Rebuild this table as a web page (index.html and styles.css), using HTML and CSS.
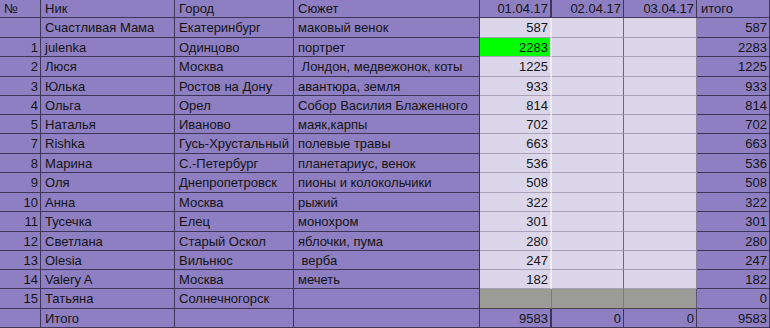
FILE: index.html
```html
<!DOCTYPE html>
<html lang="ru">
<head>
<meta charset="utf-8">
<title>Таблица</title>
<link rel="stylesheet" href="styles.css">
</head>
<body>
<div class="sheet">
  <div class="c">№</div><div class="c">Ник</div><div class="c">Город</div><div class="c">Сюжет</div><div class="c n d1">01.04.17</div><div class="c n">02.04.17</div><div class="c n">03.04.17</div><div class="c">итого</div>

  <div class="c n"></div><div class="c">Счастливая Мама</div><div class="c">Екатеринбург</div><div class="c">маковый венок</div><div class="c n l l1">587</div><div class="c l l2"></div><div class="c l l3"></div><div class="c n">587</div>

  <div class="c n">1</div><div class="c">julenka</div><div class="c">Одинцово</div><div class="c">портрет</div><div class="c n g">2283</div><div class="c l l2"></div><div class="c l l3"></div><div class="c n">2283</div>

  <div class="c n">2</div><div class="c">Люся</div><div class="c">Москва</div><div class="c"> Лондон, медвежонок, коты</div><div class="c n l l1">1225</div><div class="c l l2"></div><div class="c l l3"></div><div class="c n">1225</div>

  <div class="c n">3</div><div class="c">Юлька</div><div class="c">Ростов на Дону</div><div class="c">авантюра, земля</div><div class="c n l l1">933</div><div class="c l l2"></div><div class="c l l3"></div><div class="c n">933</div>

  <div class="c n">4</div><div class="c">Ольга</div><div class="c">Орел</div><div class="c">Собор Василия Блаженного</div><div class="c n l l1">814</div><div class="c l l2"></div><div class="c l l3"></div><div class="c n">814</div>

  <div class="c n">5</div><div class="c">Наталья</div><div class="c">Иваново</div><div class="c">маяк,карпы</div><div class="c n l l1">702</div><div class="c l l2"></div><div class="c l l3"></div><div class="c n">702</div>

  <div class="c n">7</div><div class="c">Rishka</div><div class="c">Гусь-Хрустальный</div><div class="c">полевые травы</div><div class="c n l l1">663</div><div class="c l l2"></div><div class="c l l3"></div><div class="c n">663</div>

  <div class="c n">8</div><div class="c">Марина</div><div class="c">С.-Петербург</div><div class="c">планетариус, венок</div><div class="c n l l1">536</div><div class="c l l2"></div><div class="c l l3"></div><div class="c n">536</div>

  <div class="c n">9</div><div class="c">Оля</div><div class="c">Днепропетровск</div><div class="c">пионы и колокольчики</div><div class="c n l l1">508</div><div class="c l l2"></div><div class="c l l3"></div><div class="c n">508</div>

  <div class="c n">10</div><div class="c">Анна</div><div class="c">Москва</div><div class="c">рыжий</div><div class="c n l l1">322</div><div class="c l l2"></div><div class="c l l3"></div><div class="c n">322</div>

  <div class="c n">11</div><div class="c">Тусечка</div><div class="c">Елец</div><div class="c">монохром</div><div class="c n l l1">301</div><div class="c l l2"></div><div class="c l l3"></div><div class="c n">301</div>

  <div class="c n">12</div><div class="c">Светлана</div><div class="c">Старый Оскол</div><div class="c">яблочки, пума</div><div class="c n l l1">280</div><div class="c l l2"></div><div class="c l l3"></div><div class="c n">280</div>

  <div class="c n">13</div><div class="c">Olesia</div><div class="c">Вильнюс</div><div class="c"> верба</div><div class="c n l l1">247</div><div class="c l l2"></div><div class="c l l3"></div><div class="c n">247</div>

  <div class="c n">14</div><div class="c">Valery A</div><div class="c">Москва</div><div class="c">мечеть</div><div class="c n l l1">182</div><div class="c l l2"></div><div class="c l l3"></div><div class="c n">182</div>

  <div class="c n">15</div><div class="c">Татьяна</div><div class="c">Солнечногорск</div><div class="c"></div><div class="c gr"></div><div class="c gr"></div><div class="c gr gr3"></div><div class="c n">0</div>

  <div class="c n"></div><div class="c">Итого</div><div class="c"></div><div class="c"></div><div class="c n d1">9583</div><div class="c n">0</div><div class="c n">0</div><div class="c n">9583</div>
</div>
</body>
</html>
```
FILE: styles.css
```css
* { box-sizing: border-box; }
html, body { margin: 0; padding: 0; }
body {
  background: #8e7fc2;
  font-family: "Liberation Sans", Arial, sans-serif;
  font-size: 13px;
  color: #141414;
}
.sheet {
  display: grid;
  width: 770px;
  grid-template-columns: 41px 134px 119px 186px 72px 72px 73px 73px;
  grid-template-rows: 18px 20px 19px 20px 19px 19px 19px 20px 19px 20px 19px 20px 19px 19px 19px 20px 19px;
  overflow: hidden;
}
.c {
  display: flex;
  align-items: center;
  padding: 0 3px 0 4px;
  background: #8e7fc2;
  border-right: 1px solid #3d3658;
  border-bottom: 1px solid #3d3658;
  white-space: pre;
  overflow: hidden;
}
.n {
  justify-content: flex-end;
  padding: 0 2px 0 2px;
}
.d1 { border-right: 2px solid #3d3658; }
.l {
  background: #dcd6ea;
  border-bottom-color: #a8a1b8;
}
.l1 { border-right: 2px solid #eeebf3; }
.l2 { border-right-color: #6d6878; }
.l3 { border-right-color: #8c869a; }
.g {
  background: #00ff00;
  border-bottom-color: #a8a1b8;
  border-right: 2px solid #eeebf3;
}
.gr {
  background: #9b9b98;
  border-bottom-color: #4a4a4a;
  border-right-color: #7c7c79;
}
.gr3 { border-right-color: #5c5870; }
```
